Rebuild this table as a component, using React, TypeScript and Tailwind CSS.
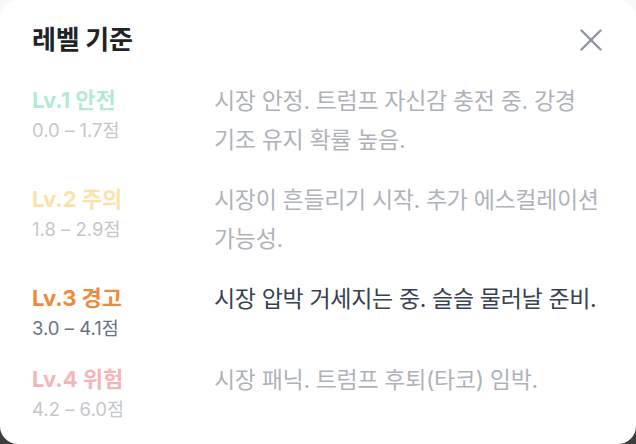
import React from 'react';

const levels = [
  { id: 1, label: 'Lv.1 안전', range: '0.0 – 1.7점', desc: '시장 안정. 트럼프 자신감 충전 중. 강경 기조 유지 확률 높음.', color: 'text-[#41c99e]' },
  { id: 2, label: 'Lv.2 주의', range: '1.8 – 2.9점', desc: '시장이 흔들리기 시작. 추가 에스컬레이션 가능성.', color: 'text-[#f7b928]' },
  { id: 3, label: 'Lv.3 경고', range: '3.0 – 4.1점', desc: '시장 압박 거세지는 중. 슬슬 물러날 준비.', color: 'text-[#ef8a3c]' },
  { id: 4, label: 'Lv.4 위험', range: '4.2 – 6.0점', desc: '시장 패닉. 트럼프 후퇴(타코) 임박.', color: 'text-[#e5484d]' },
];

const currentLevel = 3;

const App = () => {
  return (
    <div
      className="h-screen w-full bg-[linear-gradient(to_bottom,#f7f7f7_50%,#3d3d3d_50%)]"
      style={{ fontFamily: 'Inter, "Noto Sans CJK KR", sans-serif' }}
    >
      <div className="h-full rounded-[18px] bg-white pl-8 pr-[22px] pt-6">
        {/* Header */}
        <div className="flex h-8 items-center justify-between">
          <h2 className="text-[26px] font-bold leading-8 tracking-[-0.01em] text-[#1f2328]">레벨 기준</h2>
          <button className="mr-[12px] text-[#8e949c]">
            <svg width="22" height="22" viewBox="0 0 22 22" fill="none" stroke="currentColor" strokeWidth="2.4" strokeLinecap="round">
              <path d="M1.5 1.5L20.5 20.5M20.5 1.5L1.5 20.5" />
            </svg>
          </button>
        </div>

        {/* Levels */}
        <div className="mt-[26px] flex flex-col gap-[21px]">
          {levels.map((lv) => {
            const isActive = lv.id === currentLevel;
            return (
              <div key={lv.id} className={`flex items-start ${isActive ? '' : 'opacity-40'}`}>
                <div className="w-[182px] shrink-0">
                  <p className={`text-[22px] font-bold leading-[36px] ${lv.color}`}>{lv.label}</p>
                  <p className="text-[18.5px] leading-[24px] text-[#6b7280]">{lv.range}</p>
                </div>
                <p className="flex-1 break-keep text-[23px] leading-[39px] tracking-[-0.015em] text-[#374151]">{lv.desc}</p>
              </div>
            );
          })}
        </div>
      </div>
    </div>
  );
};

export default App;
